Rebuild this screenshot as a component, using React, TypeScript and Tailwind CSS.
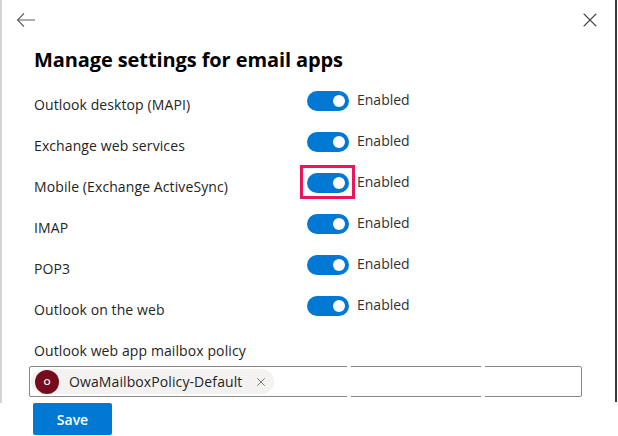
import React from 'react';
import { X } from 'lucide-react';

const apps = [
  'Outlook desktop (MAPI)',
  'Exchange web services',
  'Mobile (Exchange ActiveSync)',
  'IMAP',
  'POP3',
  'Outlook on the web',
];

const Toggle = () => (
  <div className="w-[42px] h-[20px] rounded-full bg-[#0078d4] flex items-center justify-end pr-[4px]">
    <div className="w-[12px] h-[12px] rounded-full bg-white" />
  </div>
);

const App = () => {
  return (
    <div
      className="w-[618px] h-[436px] bg-white text-[#252423] overflow-hidden"
      style={{ fontFamily: '"Segoe UI", "Open Sans", "Noto Sans", sans-serif' }}
    >
      <div className="h-[403px] border-l-2 border-[#d4d4d4] relative">
        <div className="absolute top-0 right-[1px] w-[2px] h-[402px] bg-[#3b3a39]" />

        {/* header */}
        <div className="h-[40px] flex items-center justify-between pl-[14px] pr-[16px]">
          <svg width="20" height="16" viewBox="0 0 20 16" fill="none" stroke="#605e5c" strokeWidth="1.1">
            <path d="M19 8H2M8 1.5L1.5 8L8 14.5" />
          </svg>
          <X className="w-[24px] h-[24px] text-[#444]" strokeWidth={1.1} />
        </div>

        <h1 className="ml-[32px] mt-[6px] text-[20px] leading-[28px] font-bold text-black tracking-[-0.1px]">
          Manage settings for email apps
        </h1>

        <div className="mt-[6px]">
          {apps.map((app, i) => (
            <div key={app} className="h-[41px] flex items-center">
              <div className="w-[305px] pl-[32px] mt-[8px] text-[14px] leading-[20px] tracking-[0.1px]">{app}</div>
              <div className="relative flex items-center">
                {i === 2 && (
                  <div className="absolute left-[-7px] top-[-8px] w-[55px] h-[34px] border-[3px] border-[#e8175d]" />
                )}
                <Toggle />
                <span className="ml-[8px] text-[14px] leading-[20px] -mt-[2px] text-[#323130]">Enabled</span>
              </div>
            </div>
          ))}
        </div>

        <div className="ml-[32px] mt-[15px] text-[14px] leading-[20px] tracking-[0.1px]">
          Outlook web app mailbox policy
        </div>
        <div className="relative ml-[27px] mt-[5px] w-[553px] h-[31px] border border-[#8a8886] rounded-[2px] flex items-center pl-[1px]">
          <div className="absolute top-[-1px] left-[317px] w-[4px] h-[31px] bg-white" />
          <div className="absolute top-[-1px] left-[451px] w-[4px] h-[31px] bg-white" />
          <div className="relative h-[25px] rounded-full bg-[#f3f2f1] flex items-center pl-[4px] pr-[6px]">
            <div className="w-[24px] h-[24px] rounded-full bg-[#750b1c] text-white text-[9px] font-semibold flex items-center justify-center">
              O
            </div>
            <span className="ml-[10px] text-[14px] leading-[20px] tracking-[0.1px]">OwaMailboxPolicy-Default</span>
            <X className="ml-[12px] w-[14px] h-[14px] text-[#605e5c]" strokeWidth={1.4} />
          </div>
        </div>
      </div>

      <div className="pl-[33px]">
        <button className="w-[79px] h-[32px] bg-[#0078d4] text-white text-[14px] font-semibold rounded-[2px]">
          Save
        </button>
      </div>
    </div>
  );
};

export default App;
